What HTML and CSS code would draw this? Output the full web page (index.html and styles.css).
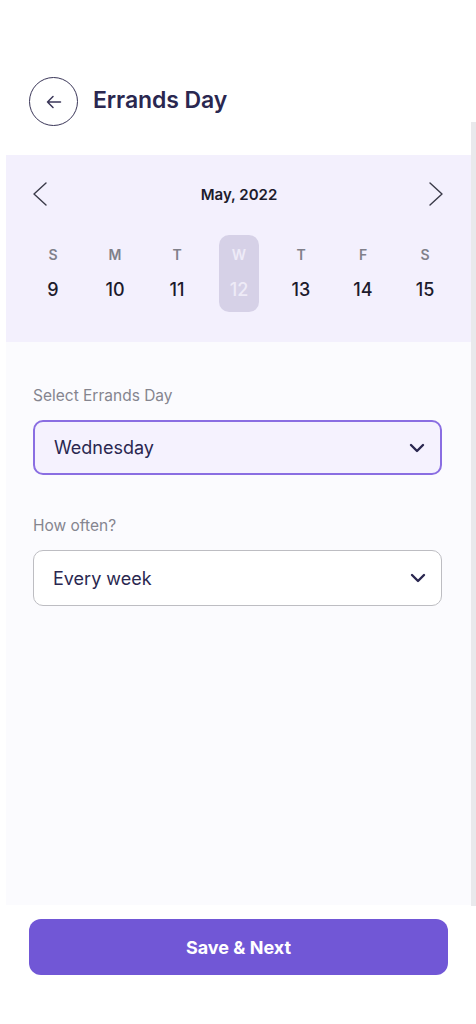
FILE: index.html
```html
<!DOCTYPE html>
<html lang="en">
<head>
<meta charset="utf-8">
<title>Errands Day</title>
<link rel="stylesheet" href="styles.css">
</head>
<body>
<div class="app">
  <div class="content">
    <header class="header">
      <button class="back" aria-label="Back">
        <svg width="20" height="20" viewBox="0 0 20 20" fill="none" stroke="#3a3658" stroke-width="1.5" stroke-linecap="round" stroke-linejoin="round"><path d="M16.5 10H3.5M9 4.5L3.5 10L9 15.5"/></svg>
      </button>
      <h1 class="title">Errands Day</h1>
    </header>

    <section class="calendar">
      <div class="month-row">
        <svg class="nav" width="16" height="26" viewBox="0 0 16 26" fill="none" stroke="#3a3a48" stroke-width="1.4" stroke-linecap="round" stroke-linejoin="round"><path d="M14 2L2 13L14 24"/></svg>
        <div class="month">May, 2022</div>
        <svg class="nav" width="16" height="26" viewBox="0 0 16 26" fill="none" stroke="#3a3a48" stroke-width="1.4" stroke-linecap="round" stroke-linejoin="round"><path d="M2 2L14 13L2 24"/></svg>
      </div>
      <div class="week">
        <div class="day"><span class="dl">S</span><span class="dn">9</span></div>
        <div class="day"><span class="dl">M</span><span class="dn">10</span></div>
        <div class="day"><span class="dl">T</span><span class="dn">11</span></div>
        <div class="day active"><span class="dl">W</span><span class="dn">12</span></div>
        <div class="day"><span class="dl">T</span><span class="dn">13</span></div>
        <div class="day"><span class="dl">F</span><span class="dn">14</span></div>
        <div class="day"><span class="dl">S</span><span class="dn">15</span></div>
      </div>
    </section>

    <section class="form">
      <label class="label">Select Errands Day</label>
      <div class="select focused">
        <span>Wednesday</span>
        <svg width="16" height="10" viewBox="0 0 16 10" fill="none" stroke="#2a2750" stroke-width="2.4" stroke-linecap="round" stroke-linejoin="round"><path d="M2 2L8 8L14 2"/></svg>
      </div>
      <label class="label second">How often?</label>
      <div class="select">
        <span>Every week</span>
        <svg width="16" height="10" viewBox="0 0 16 10" fill="none" stroke="#2a2750" stroke-width="2.4" stroke-linecap="round" stroke-linejoin="round"><path d="M2 2L8 8L14 2"/></svg>
      </div>
    </section>

    <footer class="footer">
      <button class="save">Save &amp; Next</button>
    </footer>
  </div>
  <div class="scrollbar"></div>
</div>
</body>
</html>
```

FILE: styles.css
```css
* { box-sizing: border-box; }
html, body { margin: 0; padding: 0; background: #ffffff; }
body {
  font-family: "Inter", "Noto Sans", sans-serif;
  color: #2a2750;
}
.app {
  display: flex;
  min-height: 1024px;
}
.content {
  flex: 1;
  min-width: 0;
  padding-left: 6px;
  display: flex;
  flex-direction: column;
}
.scrollbar {
  flex: 0 0 5px;
  background: #e9e9ec;
  margin: 122px 0 118px;
}
.header {
  display: flex;
  align-items: flex-start;
  gap: 15px;
  padding: 77px 0 0 23px;
  height: 155px;
}
.back {
  width: 49px;
  height: 49px;
  border-radius: 50%;
  border: 1.3px solid #3a3658;
  background: #fff;
  display: flex;
  align-items: center;
  justify-content: center;
  padding: 0;
}
.title {
  margin: 0;
  font-size: 23px;
  font-weight: 600;
  line-height: 47px;
  color: #2a2750;
  letter-spacing: -0.1px;
}
.calendar {
  background: #f3f0fd;
  padding: 27px 0 30px;
}
.month-row {
  display: flex;
  align-items: center;
  justify-content: space-between;
  height: 24px;
  padding: 0 27px 0 26px;
}
.month {
  font-size: 15px;
  font-weight: 600;
  color: #1d1b2c;
  margin-left: 2px;
}
.week {
  display: grid;
  grid-template-columns: repeat(7, 1fr);
  margin-top: 29px;
  padding: 0 15px 0 16px;
}
.day {
  justify-self: center;
  width: 40px;
  height: 77px;
  padding: 10px 0;
  display: flex;
  flex-direction: column;
  align-items: center;
  gap: 13px;
  border-radius: 10px;
}
.dl {
  font-size: 14px;
  line-height: 20px;
  font-weight: 600;
  color: #80808a;
}
.dn {
  font-size: 18px;
  line-height: 24px;
  font-weight: 500;
  color: #1d1b2c;
}
.day.active { background: #d6d1e7; }
.day.active .dl, .day.active .dn { color: #eeebf7; }
.form {
  flex: 1;
  background: #fbfbfe;
  padding: 44px 29px 0 27px;
  display: flex;
  flex-direction: column;
}
.label {
  font-size: 15.5px;
  line-height: 20px;
  color: #85858f;
  margin-bottom: 14px;
}
.label.second { margin-top: 41px; }
.select {
  height: 56px;
  border: 1.3px solid #bdbdc2;
  border-radius: 10px;
  background: #ffffff;
  display: flex;
  align-items: center;
  justify-content: space-between;
  padding: 0 15px 0 19px;
  font-size: 18px;
  color: #2a2750;
}
.select.focused {
  height: 55px;
  border: 2px solid #8a6ee2;
  background: #f5f2fe;
}
.footer {
  padding: 14px 23px 49px 23px;
  background: #ffffff;
}
.save {
  width: 100%;
  height: 56px;
  border: none;
  border-radius: 12px;
  background: #7157d6;
  color: #ffffff;
  font-family: inherit;
  font-size: 18px;
  font-weight: 700;
}
```
